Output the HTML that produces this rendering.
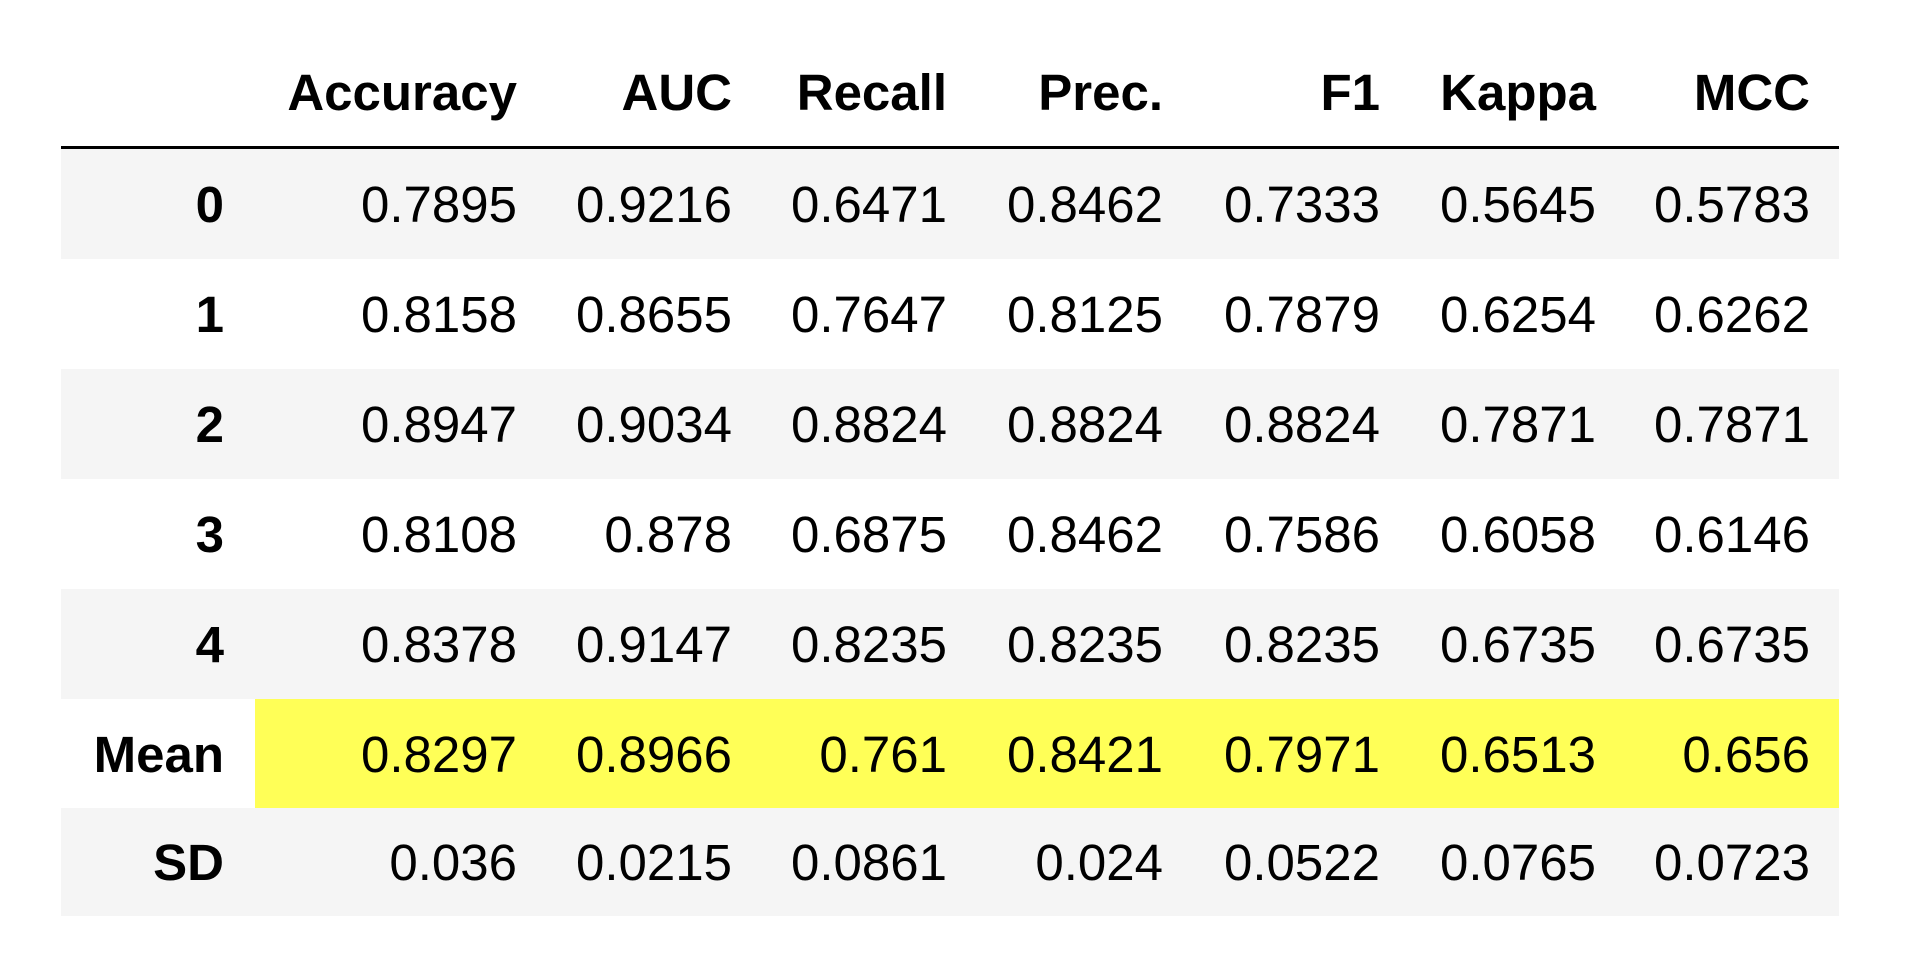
<!DOCTYPE html>
<html><head><meta charset="utf-8"><style>
body{margin:0;width:1920px;height:976px;background:#fff;position:relative;overflow:hidden;font-family:"Liberation Sans",Arial,sans-serif;color:#000}
.row{position:absolute;left:61px;width:1778px;height:110px;display:flex;align-items:center;font-size:51px}
.row div{text-align:right;flex:none}
.c0{width:163px;font-weight:bold}
.c1{width:293px}.c2{width:215px}.c3{width:215px}.c4{width:216px}.c5{width:217px}.c6{width:216px}.c7{width:214px}
.hd{font-weight:bold}
.g{background:#f5f5f5}
.line{position:absolute;left:61px;width:1778px;top:146px;height:4px;background:#000}
.hl{position:absolute;left:255px;width:1584px;top:699px;height:109px;background:#ffff57}
</style></head><body>
<div class="row hd" style="top:37px"><div class="c0"></div><div class="c1">Accuracy</div><div class="c2">AUC</div><div class="c3">Recall</div><div class="c4">Prec.</div><div class="c5">F1</div><div class="c6">Kappa</div><div class="c7">MCC</div></div>
<div class="line"></div>
<div class="row g" style="top:149px"><div class="c0">0</div><div class="c1">0.7895</div><div class="c2">0.9216</div><div class="c3">0.6471</div><div class="c4">0.8462</div><div class="c5">0.7333</div><div class="c6">0.5645</div><div class="c7">0.5783</div></div>
<div class="row" style="top:259px"><div class="c0">1</div><div class="c1">0.8158</div><div class="c2">0.8655</div><div class="c3">0.7647</div><div class="c4">0.8125</div><div class="c5">0.7879</div><div class="c6">0.6254</div><div class="c7">0.6262</div></div>
<div class="row g" style="top:369px"><div class="c0">2</div><div class="c1">0.8947</div><div class="c2">0.9034</div><div class="c3">0.8824</div><div class="c4">0.8824</div><div class="c5">0.8824</div><div class="c6">0.7871</div><div class="c7">0.7871</div></div>
<div class="row" style="top:479px"><div class="c0">3</div><div class="c1">0.8108</div><div class="c2">0.878</div><div class="c3">0.6875</div><div class="c4">0.8462</div><div class="c5">0.7586</div><div class="c6">0.6058</div><div class="c7">0.6146</div></div>
<div class="row g" style="top:589px"><div class="c0">4</div><div class="c1">0.8378</div><div class="c2">0.9147</div><div class="c3">0.8235</div><div class="c4">0.8235</div><div class="c5">0.8235</div><div class="c6">0.6735</div><div class="c7">0.6735</div></div>
<div class="hl"></div>
<div class="row" style="top:699px"><div class="c0">Mean</div><div class="c1">0.8297</div><div class="c2">0.8966</div><div class="c3">0.761</div><div class="c4">0.8421</div><div class="c5">0.7971</div><div class="c6">0.6513</div><div class="c7">0.656</div></div>
<div class="row g" style="top:808px;height:108px"><div class="c0">SD</div><div class="c1">0.036</div><div class="c2">0.0215</div><div class="c3">0.0861</div><div class="c4">0.024</div><div class="c5">0.0522</div><div class="c6">0.0765</div><div class="c7">0.0723</div></div>
</body></html>
